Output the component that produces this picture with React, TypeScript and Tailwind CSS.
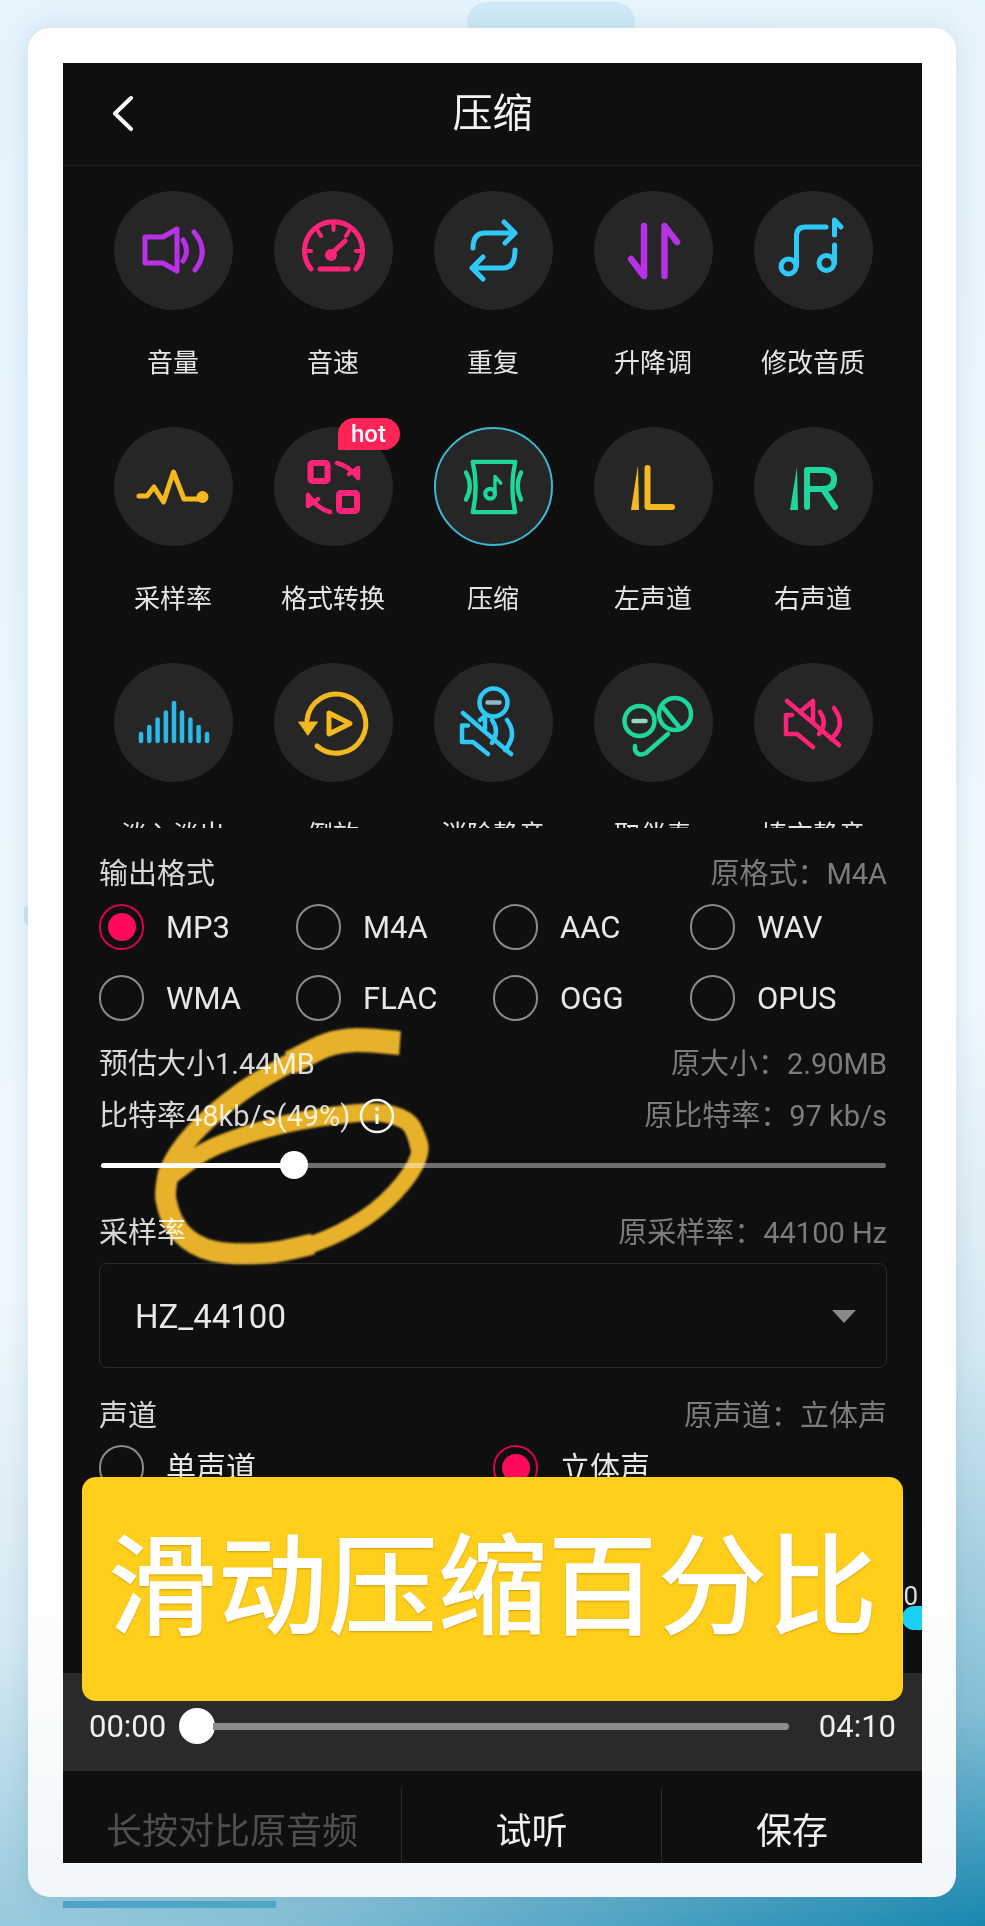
import type { ReactNode } from "react";

const PURPLE = "#b732e6";
const PINK = "#ff2478";
const CYAN = "#2fc9f7";
const YELLOW = "#f4b91f";
const GREEN = "#1fd79c";

function Glyph({ color, width = 5, children }: { color: string; width?: number; children: ReactNode }) {
  return (
    <svg viewBox="0 0 119 119" className="h-full w-full" fill="none" stroke={color} strokeWidth={width} strokeLinecap="round" strokeLinejoin="round">
      {children}
    </svg>
  );
}

const tools: { label: string; icon: ReactNode; hot?: boolean; active?: boolean }[] = [
  {
    label: "音量",
    icon: (
      <Glyph color={PURPLE}>
        <path d="M31 46H49L63 38V80L49 72H31Z" />
        <path d="M69 49Q76 60 69 70" />
        <path d="M80 41Q96 60 81 79" />
      </Glyph>
    ),
  },
  {
    label: "音速",
    icon: (
      <Glyph color={PINK}>
        <path d="M37 78A29 29 0 1 1 82 78" />
        <path d="M59.5 33V39M44 40L47 45M75 40L72 45M32 60H37M82 60H87" strokeWidth={4} />
        <path d="M57 63L71 50" />
        <circle cx="57" cy="64" r="3.5" fill={PINK} />
        <path d="M46 78H74" />
      </Glyph>
    ),
  },
  {
    label: "重复",
    icon: (
      <Glyph color={CYAN}>
        <path d="M39 57Q39 42 51 42H81M70 31L81 42L71 52" />
        <path d="M81 59Q81 77 69 77H38M49 66L38 77L49 88" />
      </Glyph>
    ),
  },
  {
    label: "升降调",
    icon: (
      <Glyph color={PURPLE} width={6.5}>
        <path d="M50 35V85L37 68" />
        <path d="M70.5 85V35L83 51" />
      </Glyph>
    ),
  },
  {
    label: "修改音质",
    icon: (
      <Glyph color={CYAN}>
        <circle cx="34.5" cy="75.5" r="7.5" />
        <path d="M42.5 75V45Q42.5 36 51 36H72" />
        <circle cx="72.5" cy="72" r="7.5" />
        <path d="M80.5 72V54" />
        <path d="M80.5 44V29L87 36" />
      </Glyph>
    ),
  },
  {
    label: "采样率",
    icon: (
      <Glyph color={YELLOW}>
        <path d="M25 69H33L40 60L49.5 75L59.5 45L70 72H88" />
        <circle cx="88.5" cy="70" r="3.5" fill={YELLOW} />
      </Glyph>
    ),
  },
  {
    label: "格式转换",
    hot: true,
    icon: (
      <Glyph color={PINK} width={6}>
        <rect x="36.5" y="36" width="17" height="18" rx="2" />
        <rect x="65" y="66" width="18" height="18" rx="2" />
        <path d="M63 36Q75 39 84 51V41L75 47" strokeWidth={4.5} />
        <path d="M56 85Q44 82 34 68V79L44 72" strokeWidth={4.5} />
      </Glyph>
    ),
  },
  {
    label: "压缩",
    active: true,
    icon: (
      <Glyph color={GREEN} width={4.5}>
        <path d="M38 34H82Q76 60 82 86H38Q44 60 38 34Z" />
        <path d="M31 45Q39 59 31 73" />
        <path d="M88 45Q81 59 88 73" />
        <circle cx="56" cy="67" r="5" />
        <path d="M61 67V49L67 56" strokeWidth={3.5} />
      </Glyph>
    ),
  },
  {
    label: "左声道",
    icon: (
      <Glyph color={YELLOW} width={6}>
        <path d="M44 38L45 83H37Z" fill={YELLOW} stroke="none" />
        <path d="M53.5 41V80H78" />
      </Glyph>
    ),
  },
  {
    label: "右声道",
    icon: (
      <Glyph color={GREEN} width={6}>
        <path d="M43 40L44 83H36Z" fill={GREEN} stroke="none" />
        <path d="M53 80V43H69Q80 43 80 52.5Q80 62 69 62H53M69 62L81 80" />
      </Glyph>
    ),
  },
  {
    label: "淡入淡出",
    icon: (
      <Glyph color="#2bb9ea" width={4.5}>
        <path d="M27 71V78M35.3 64V78M43.6 56.5V78M51.9 49.5V78M60 40V78M68 49.5V78M76.4 56.5V78M84.6 64V78M93 71V78" />
      </Glyph>
    ),
  },
  {
    label: "倒放",
    icon: (
      <Glyph color={YELLOW}>
        <path d="M33 57A29.5 29.5 0 1 1 43 83" />
        <path d="M25 59H43.5L34 72Z" fill={YELLOW} strokeWidth={1} />
        <path d="M55 50L76 60.5L55 71Z" />
      </Glyph>
    ),
  },
  {
    label: "消除静音",
    icon: (
      <Glyph color={CYAN} width={4.5}>
        <circle cx="59.5" cy="39.5" r="14" />
        <path d="M53.5 39.5H65.5" stroke="#8fb7c4" />
        <path d="M29 50L77 91" />
        <path d="M34 62.5H28V79H39L54 91M46 57L51 53V66" />
        <path d="M58 57Q66 68 58 80M73 57Q84 72 71 87" />
      </Glyph>
    ),
  },
  {
    label: "取伴奏",
    icon: (
      <Glyph color={GREEN} width={4.5}>
        <circle cx="45.5" cy="58" r="15" />
        <path d="M39.5 58H51.5" stroke="#8fdcc0" />
        <circle cx="81" cy="51" r="16" />
        <path d="M68 43L86 65" />
        <path d="M74 71L52 90Q44 94 41 87V83" />
      </Glyph>
    ),
  },
  {
    label: "填充静音",
    icon: (
      <Glyph color={PINK} width={4.5}>
        <path d="M33 38L85 82" />
        <path d="M38 52H32V71H43L59 84M47 48L59 38V58" />
        <path d="M66 49Q74 60 65 71M80 45Q93 62 77 76" />
      </Glyph>
    ),
  },
];

// catmull-rom through the points, good enough for a marker stroke
function smooth(pts: number[][]) {
  let d = `M${pts[0][0]} ${pts[0][1]}`;
  for (let i = 0; i < pts.length - 1; i++) {
    const p0 = pts[i - 1] ?? pts[i];
    const p1 = pts[i];
    const p2 = pts[i + 1];
    const p3 = pts[i + 2] ?? p2;
    const c1 = [p1[0] + (p2[0] - p0[0]) / 6, p1[1] + (p2[1] - p0[1]) / 6];
    const c2 = [p2[0] - (p3[0] - p1[0]) / 6, p2[1] - (p3[1] - p1[1]) / 6];
    d += `C${c1[0]} ${c1[1]} ${c2[0]} ${c2[1]} ${p2[0]} ${p2[1]}`;
  }
  return d;
}

const marker: { width: number; pts: number[][] }[] = [
  { width: 24, pts: [[400, 1043], [357, 1040], [327, 1045], [290, 1063]] },
  { width: 19, pts: [[327, 1045], [290, 1063], [240, 1093], [194, 1133], [169, 1170], [166, 1200]] },
  { width: 21, pts: [[169, 1170], [166, 1200], [181, 1233], [213, 1251], [267, 1253], [313, 1244]] },
  { width: 17, pts: [[267, 1253], [313, 1244], [365, 1218], [403, 1183], [420, 1150], [410, 1124]] },
  { width: 18, pts: [[420, 1150], [410, 1124], [383, 1113], [347, 1114], [290, 1123], [240, 1137], [204, 1152], [169, 1177]] },
];

function Radio({ checked, label, cjk }: { checked?: boolean; label: string; cjk?: boolean }) {
  return (
    <div className="flex items-center">
      <div className={`flex h-[46px] w-[45px] shrink-0 items-center justify-center rounded-full border-2 ${checked ? "border-[#d8024e]" : "border-[#8b8b8b]"}`}>
        {checked && <div className="h-[28px] w-[28px] rounded-full bg-[#ff0a5c]" />}
      </div>
      <span className={`ml-[22px] leading-none text-[#e8e8e8] ${cjk ? "text-[30px]" : "text-[31px]"}`}>{label}</span>
    </div>
  );
}

function InfoRow({ left, right, className = "" }: { left: ReactNode; right: string; className?: string }) {
  return (
    <div className={`flex h-[36px] items-center justify-between text-[29px] leading-none ${className}`}>
      <div className="flex items-center text-[#d8d8d8]">{left}</div>
      <span className="text-[#7c7c7c]">{right}</span>
    </div>
  );
}

export default function App() {
  const formats = ["MP3", "M4A", "AAC", "WAV", "WMA", "FLAC", "OGG", "OPUS"];

  return (
    <div className="relative h-[1926px] w-[985px] overflow-hidden bg-[linear-gradient(163deg,#e5f4fd_0%,#f0f8fe_58%,#d4e9f2_74%,#86c0d7_90%,#1787af_100%)] pt-[28px] pl-[28px] font-['Roboto','Noto_Sans_CJK_SC',sans-serif]">
      {/* bits of other cards peeking out from behind */}
      <div className="absolute left-[467px] top-[2px] h-[40px] w-[168px] rounded-[20px] bg-[#cfeaf6]" />
      <div className="absolute left-[24px] top-[905px] h-[20px] w-[10px] rounded-full bg-[#cfe6f0]" />
      <div className="absolute left-[63px] top-[1901px] h-[7px] w-[213px] bg-[#4fa8c9]" />

      <div className="relative h-[1869px] w-[928px] rounded-[22px] bg-[linear-gradient(180deg,#ffffff_0%,#ffffff_80%,#f3f7f9_100%)] pt-[35px] pl-[35px] shadow-[0_0_24px_rgba(70,110,140,0.16)]">
        <div className="flex h-[1800px] w-[859px] flex-col overflow-hidden bg-[#0f0f10]">
          <div className="relative flex h-[103px] shrink-0 items-center justify-center border-b border-[#222222]">
            <svg className="absolute left-[48px] top-[32px] h-[36px] w-[24px]" viewBox="0 0 24 36" fill="none" stroke="#ffffff" strokeWidth="4" strokeLinecap="round" strokeLinejoin="round">
              <path d="M20 3L4 18.5L20 34" />
            </svg>
            <h1 className="text-[40px] leading-none text-[#f2f2f2]">压缩</h1>
          </div>

          <div className="h-[662px] shrink-0 overflow-hidden pt-[25px] pl-[30px] pr-[29px]">
            <div className="grid grid-cols-5 gap-y-[46px]">
              {tools.map((tool) => (
                <div key={tool.label} className="flex flex-col items-center">
                  <div className={`relative h-[119px] w-[119px] rounded-full bg-[#262626] ${tool.active ? "border-2 border-[#3fb6d3]" : ""}`}>
                    {tool.icon}
                    {tool.hot && (
                      <span className="absolute -right-[7px] -top-[9px] flex h-[32px] w-[62px] items-center justify-center rounded-[16px] rounded-bl-none bg-[#ff2458] text-[24px] font-medium leading-none text-white">
                        hot
                      </span>
                    )}
                  </div>
                  <span className="mt-[35px] text-[26px] leading-[36px] text-[#e6e6e6]">{tool.label}</span>
                </div>
              ))}
            </div>
          </div>

          <div className="shrink-0 pt-[28px] pl-[36px] pr-[35px]">
            <InfoRow left="输出格式" right="原格式：M4A" />
            <div className="mt-[12px] grid grid-cols-4 gap-y-[25px]">
              {formats.map((f, i) => (
                <Radio key={f} label={f} checked={i === 0} />
              ))}
            </div>

            <InfoRow className="mt-[25px]" left="预估大小1.44MB" right="原大小：2.90MB" />
            <InfoRow
              className="mt-[16px]"
              left={
                <>
                  比特率48kb/s(49%)
                  <svg className="ml-[9px] h-[36px] w-[36px]" viewBox="0 0 36 36" fill="none" stroke="#f2f2f2" strokeWidth="2.5">
                    <circle cx="18" cy="18" r="16" />
                    <path d="M18 16V26" strokeWidth="3" />
                    <circle cx="18" cy="11" r="1.9" fill="#f2f2f2" stroke="none" />
                  </svg>
                </>
              }
              right="原比特率：97 kb/s"
            />

            <div className="relative mt-[17px] flex h-[28px] items-center pl-[2px] pr-[1px]">
              <div className="h-[5px] w-[193px] rounded-l-full bg-white" />
              <div className="h-[5px] flex-1 rounded-r-full bg-[#6f6f6f]" />
              <div className="absolute left-[181px] top-0 h-[28px] w-[28px] rounded-full bg-white" />
            </div>

            <InfoRow className="mt-[36px]" left="采样率" right="原采样率：44100 Hz" />
            <div className="mt-[12px] flex h-[105px] items-center justify-between rounded-[8px] border border-[#2c2c2c] pt-[2px] pl-[35px] pr-[30px]">
              <span className="text-[33px] leading-none text-[#e8e8e8]">HZ_44100</span>
              <svg className="h-[13px] w-[24px]" viewBox="0 0 24 13">
                <path d="M0 0H24L12 13Z" fill="#8a8a8a" />
              </svg>
            </div>

            <InfoRow className="mt-[30px]" left="声道" right="原声道：立体声" />
            <div className="mt-[11px] grid grid-cols-[394px_1fr]">
              <Radio label="单声道" cjk />
              <Radio label="立体声" cjk checked />
            </div>
          </div>

          {/* slider hidden under the banner, only its right end shows */}
          <div className="flex shrink-0 flex-col items-end pt-[90px]">
            <span className="mr-[4px] text-[26px] leading-[30px] text-[#dddddd]">0</span>
            <div className="-mt-[5px] h-[24px] w-[20px] rounded-l-full bg-[#19d0f5]" />
          </div>

          <div className="mt-[43px] flex h-[98px] shrink-0 items-center bg-[#2a2a2a] pt-[8px] pl-[26px] pr-[26px]">
            <span className="text-[31px] leading-none text-[#f0f0f0]">00:00</span>
            <div className="ml-[13px] flex flex-1 items-center">
              <div className="h-[36px] w-[36px] shrink-0 rounded-full bg-white" />
              <div className="-ml-[2px] h-[7px] flex-1 rounded-r-full bg-[#8c8c8c]" />
            </div>
            <span className="ml-[30px] text-[31px] leading-none text-[#f0f0f0]">04:10</span>
          </div>

          <div className="grid h-[93px] shrink-0 grid-cols-[338px_260px_261px] pt-[17px] text-[36px] leading-none">
            <div className="flex items-center justify-center pt-[12px] text-[#4f4f4f]">长按对比原音频</div>
            <div className="flex items-center justify-center border-l border-[#2c2c2c] pt-[12px] text-[#f0f0f0]">试听</div>
            <div className="flex items-center justify-center border-l border-[#2c2c2c] pt-[12px] text-[#f0f0f0]">保存</div>
          </div>
        </div>
      </div>

      {/* hand drawn "6" laid over the slider, text shows through it */}
      <svg className="absolute left-[130px] top-[1015px] h-[260px] w-[320px] mix-blend-screen blur-[1px]" viewBox="130 1015 320 260" fill="none" stroke="#e6ad1c">
        {marker.map((seg, i) => (
          <path key={i} d={smooth(seg.pts)} strokeWidth={seg.width} />
        ))}
      </svg>

      <div className="absolute left-[82px] top-[1477px] flex h-[224px] w-[821px] items-center justify-center rounded-[14px] bg-[#ffcf1c] text-[110px] font-medium leading-none text-white [text-shadow:0_1px_2px_rgba(110,70,0,0.35)]">
        滑动压缩百分比
      </div>
    </div>
  );
}
